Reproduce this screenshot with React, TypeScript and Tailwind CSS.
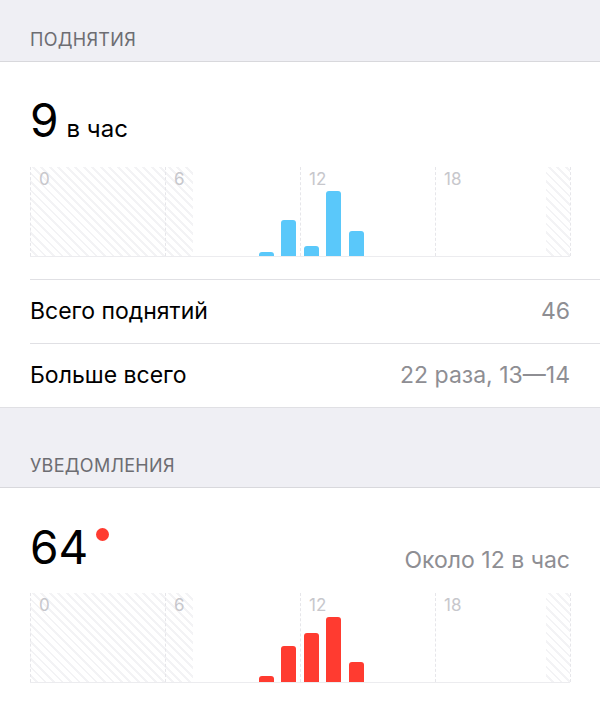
import React from "react";

type Bar = { hour: number; top: number };

const HOUR = 22.5;
const CHART_H = 90;

function HourChart({ bars, color }: { bars: Bar[]; color: string }) {
  const hatch =
    "bg-[repeating-linear-gradient(45deg,#ffffff_0px,#ffffff_4px,#f3f3f5_4px,#f3f3f5_6px)]";
  return (
    <div className="relative mx-[30px] h-[90px] border-b border-[#ececef]">
      <div className={`absolute left-0 top-0 bottom-0 w-[163px] ${hatch}`} />
      <div className={`absolute right-0 top-0 bottom-0 w-[24px] ${hatch}`} />
      {[0, 6, 12, 18, 24].map((h) => (
        <div
          key={h}
          className="absolute top-0 bottom-0 border-l border-dashed border-[#e6e6ea]"
          style={{ left: h * HOUR }}
        />
      ))}
      {[0, 6, 12, 18].map((h) => (
        <span
          key={h}
          className="absolute top-[2px] text-[17px] leading-[20px] text-[#c7c7cc]"
          style={{ left: h * HOUR + 9 }}
        >
          {h}
        </span>
      ))}
      {bars.map((b) => (
        <div
          key={b.hour}
          className={`absolute bottom-0 w-[15px] rounded-t-[3px] ${color}`}
          style={{ left: b.hour * HOUR + 3.5, height: CHART_H - b.top }}
        />
      ))}
    </div>
  );
}

function SectionHeader({ title, h }: { title: string; h: string }) {
  return (
    <div className={`${h} flex items-end px-[30px] pb-[11px] border-b border-[#d8d8dc]`}>
      <span className="text-[18px] leading-[20px] tracking-[0.3px] text-[#6d6d72]">{title}</span>
    </div>
  );
}

function Row({ label, value }: { label: string; value: string }) {
  return (
    <div className="pl-[30px]">
      <div className="h-[64px] flex items-center justify-between pr-[30px] border-t border-[#e0e0e4]">
        <span className="text-[23px] text-black">{label}</span>
        <span className="text-[23px] text-[#8e8e93]">{value}</span>
      </div>
    </div>
  );
}

export default function App() {
  const pickups: Bar[] = [
    { hour: 10, top: 86 },
    { hour: 11, top: 54 },
    { hour: 12, top: 80 },
    { hour: 13, top: 25 },
    { hour: 14, top: 65 },
  ];
  const notifications: Bar[] = [
    { hour: 10, top: 84 },
    { hour: 11, top: 54 },
    { hour: 12, top: 41 },
    { hour: 13, top: 25 },
    { hour: 14, top: 70 },
  ];

  return (
    <div className="min-h-[705px] w-full bg-[#efeff4] font-['Inter',sans-serif] antialiased">
      <SectionHeader title="ПОДНЯТИЯ" h="h-[62px]" />
      <div className="bg-white border-b border-[#e0e0e4]">
        <div className="flex items-baseline gap-[8px] px-[30px] pt-[30px] h-[105px]">
          <span className="text-[46px] leading-[56px] text-black">9</span>
          <span className="text-[24px] text-black">в час</span>
        </div>
        <HourChart bars={pickups} color="bg-[#5ac8fa]" />
        <div className="h-[22px]" />
        <Row label="Всего поднятий" value="46" />
        <Row label="Больше всего" value="22 раза, 13—14" />
      </div>

      <SectionHeader title="УВЕДОМЛЕНИЯ" h="h-[80px]" />
      <div className="bg-white">
        <div className="flex items-start justify-between px-[30px] pt-[31px] h-[105px]">
          <div className="flex items-start">
            <span className="text-[46px] leading-[56px] text-black">64</span>
            <span className="ml-[8px] mt-[9px] h-[13px] w-[13px] rounded-full bg-[#ff3b30]" />
          </div>
          <span className="mt-[27px] text-[23px] leading-[28px] text-[#8e8e93]">Около 12 в час</span>
        </div>
        <HourChart bars={notifications} color="bg-[#ff3b30]" />
        <div className="h-[30px]" />
      </div>
    </div>
  );
}
